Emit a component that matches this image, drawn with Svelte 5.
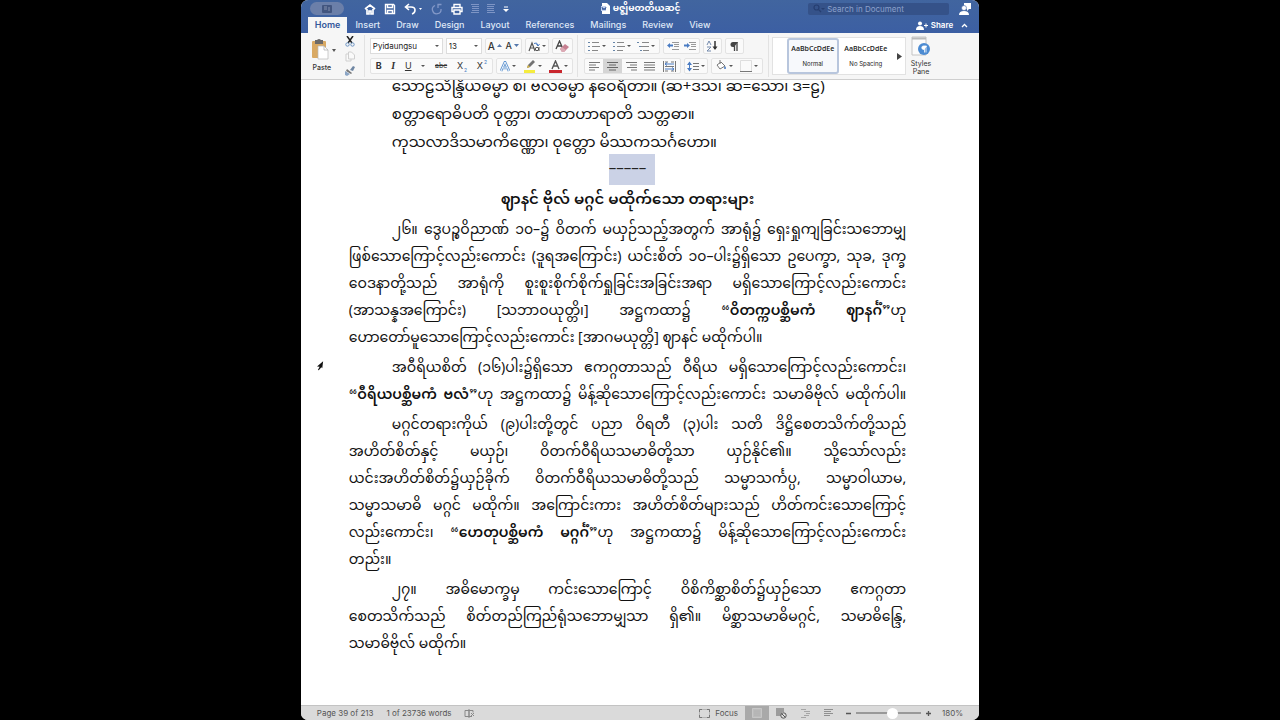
<script>
  let font = 'Pyidaungsu';
  let size = '13';
  let search = '';
  let zoom = 58;

  const tabs = ['Home', 'Insert', 'Draw', 'Design', 'Layout', 'References', 'Mailings', 'Review', 'View'];

  const verses = [
    'သောဠသိန္ဒြိယဓမ္မာ စ၊ ဗလဓမ္မာ နဝေရိတာ။ (ဆ+ဒသ၊ ဆ=သော၊ ဒ=ဠ)',
    'စတ္တာရောဓိပတိ ဝုတ္တာ၊ တထာဟာရာတိ သတ္တဓာ။',
    'ကုသလာဒိသမာကိဏ္ဏော၊ ဝုတ္တော မိဿကသင်္ဂဟော။'
  ];

  // text between asterisks is bold
  const paragraphs = [
    [
      '၂၆။ ဒွေပဉ္စဝိညာဏ် ၁၀–၌ ဝိတက် မယှဉ်သည့်အတွက် အာရုံ၌ ရှေးရှုကျခြင်းသဘောမျှ',
      'ဖြစ်သောကြောင့်လည်းကောင်း (ဒူရအကြောင်း) ယင်းစိတ် ၁၀–ပါး၌ရှိသော ဥပေက္ခာ, သုခ, ဒုက္ခ',
      'ဝေဒနာတို့သည် အာရုံကို စူးစူးစိုက်စိုက်ရှုခြင်းအခြင်းအရာ မရှိသောကြောင့်လည်းကောင်း',
      '(အာသန္နအကြောင်း) [သဘာဝယုတ္တိ၊] အဋ္ဌကထာ၌ “*ဝိတက္ကပစ္ဆိမကံ ဈာနင်္ဂံ*”ဟု',
      'ဟောတော်မူသောကြောင့်လည်းကောင်း [အာဂမယုတ္တိ] ဈာနင် မထိုက်ပါ။'
    ],
    [
      'အဝီရိယစိတ် (၁၆)ပါး၌ရှိသော ဧကဂ္ဂတာသည် ဝီရိယ မရှိသောကြောင့်လည်းကောင်း၊',
      '“*ဝီရိယပစ္ဆိမကံ ဗလံ*”ဟု အဋ္ဌကထာ၌ မိန့်ဆိုသောကြောင့်လည်းကောင်း သမာဓိဗိုလ် မထိုက်ပါ။'
    ],
    [
      'မဂ္ဂင်တရားကိုယ် (၉)ပါးတို့တွင် ပညာ ဝိရတီ (၃)ပါး သတိ ဒိဋ္ဌိစေတသိက်တို့သည်',
      'အဟိတ်စိတ်နှင့် မယှဉ်၊ ဝိတက်ဝီရိယသမာဓိတို့သာ ယှဉ်နိုင်၏။ သို့သော်လည်း',
      'ယင်းအဟိတ်စိတ်၌ယှဉ်ခိုက် ဝိတက်ဝီရိယသမာဓိတို့သည် သမ္မာသင်္ကပ္ပ, သမ္မာဝါယာမ,',
      'သမ္မာသမာဓိ မဂ္ဂင် မထိုက်။ အကြောင်းကား အဟိတ်စိတ်များသည် ဟိတ်ကင်းသောကြောင့်',
      'လည်းကောင်း၊ “*ဟေတုပစ္ဆိမကံ မဂ္ဂင်္ဂံ*”ဟု အဋ္ဌကထာ၌ မိန့်ဆိုသောကြောင့်လည်းကောင်း',
      'တည်း။'
    ],
    [
      '၂၇။ အဓိမောက္ခမှ ကင်းသောကြောင့် ဝိစိကိစ္ဆာစိတ်၌ယှဉ်သော ဧကဂ္ဂတာ',
      'စေတသိက်သည် စိတ်တည်ကြည်ရုံသဘောမျှသာ ရှိ၏။ မိစ္ဆာသမာဓိမဂ္ဂင်, သမာဓိန္ဒြေ,',
      'သမာဓိဗိုလ် မထိုက်။'
    ]
  ];

  // a closing line is only stretched when it nearly fills the column
  const isShort = (lines, i) => i === lines.length - 1 && lines[i].length < 75;
</script>

<div class="window">
  <header>
    <div class="titlebar">
      <div class="left">
        <button class="pill" aria-label="Window controls">
          <svg width="12" height="8" viewBox="0 0 12 8"><rect x="1" y="0" width="10" height="8" rx="1" fill="#42557f" /><path d="M3 2h3M3 4h3M8 2v4" stroke="#8592af" /></svg>
        </button>
        <div class="quick">
          <button aria-label="Home"><svg width="12" height="12" viewBox="0 0 12 12"><path d="M1 6l5-4 5 4M3 6v5h2V8h2v3h2V6" fill="none" stroke="#fff" stroke-width="1.7" /></svg></button>
          <button aria-label="Save"><svg width="12" height="12" viewBox="0 0 12 12"><path d="M1.500 1.500h8l1 1v8h-9zM3.500 1.500v3h5v-3M3.500 10.500v-3h5v3" fill="none" stroke="#fff" stroke-width="1.400" /></svg></button>
          <button aria-label="Undo"><svg width="19" height="12" viewBox="0 0 19 12"><path d="M5 1L1.500 4 5 7M2 4h5q4 0 4 3t-3 4" fill="none" stroke="#fff" stroke-width="1.600" /><path d="M15 5h3l-1.500 2z" fill="#fff" /></svg></button>
          <button aria-label="Redo"><svg width="12" height="12" viewBox="0 0 12 12"><path d="M4 2.500a4.300 4.300 0 1 0 6 3.500M7 5V1.500h3.500" fill="none" stroke="#8197c7" stroke-width="1.300" /></svg></button>
          <button aria-label="Print"><svg width="12" height="12" viewBox="0 0 12 12"><path d="M3 4V1.500h6V4M3 8.500H1V4.500h10v4H9M3 7h6v4H3z" fill="none" stroke="#fff" stroke-width="1.400" /></svg></button>
          <button aria-label="Outdent"><svg width="8" height="10" viewBox="0 0 8 10"><path d="M0 .5h8M1 2.500h7M1 4.500h7M1 6.500h7M0 8.500h8" stroke="#7e95c5" /></svg></button>
          <button aria-label="Indent"><svg width="8" height="10" viewBox="0 0 8 10"><path d="M0 .5h8M0 2.500h7M0 4.500h7M0 6.500h7M0 8.500h8" stroke="#7e95c5" /></svg></button>
          <button aria-label="Customize"><svg width="6" height="8" viewBox="0 0 6 8"><path d="M1 2h4" stroke="#fff" /><path d="M0 4h6L3 7z" fill="#fff" /></svg></button>
        </div>
      </div>
      <h1>
        <svg width="9" height="11" viewBox="0 0 9 11"><path d="M1 0h5l3 3v8H1z" fill="#fff" /><path d="M0 3h5v5H0z" fill="#c4d2ee" /><path d="M1 4l1 3 1-2 1 2 1-3" stroke="#3d5f9f" fill="none" /></svg>
        <span>မဇ္ဈိမတတိယဆင့်</span>
      </h1>
      <div class="right">
        <label class="search">
          <svg width="12" height="9" viewBox="0 0 12 9"><circle cx="3.500" cy="3.500" r="2.500" fill="none" stroke="#263e70" stroke-width="1.200" /><path d="M5.500 5.500L8 8" stroke="#263e70" stroke-width="1.200" /><path d="M8 4h4l-2 2z" fill="#263e70" /></svg>
          <input type="text" placeholder="Search in Document" aria-label="Search in Document" bind:value={search} />
        </label>
        <button class="presence" aria-label="Account"><svg width="12" height="12" viewBox="0 0 12 12"><path d="M5 0h7v6h-2l-2 2V6H5z" fill="#fff" /><circle cx="5" cy="5" r="2.500" fill="#fff" stroke="#3d5f9f" stroke-width=".6" /><path d="M0 12q0-4 5-4t5 4z" fill="#fff" /></svg></button>
      </div>
    </div>
    <nav>
      {#each tabs as tab, i}
        <button class="tab" class:active={i === 0}>{tab}</button>
      {/each}
      <button class="share"><svg width="12" height="9" viewBox="0 0 12 9"><circle cx="4" cy="2.500" r="2" fill="#fff" /><path d="M0 9q0-4 4-4t4 4z" fill="#fff" /><path d="M8 4.500h4M10 2.500v4" stroke="#fff" /></svg>Share</button>
      <button class="collapse" aria-label="Collapse ribbon"><svg width="7" height="5" viewBox="0 0 7 5"><path d="M1 4l2.500-2.500L6 4" fill="none" stroke="#fff" stroke-width="1.300" /></svg></button>
    </nav>
  </header>

  <section class="ribbon" aria-label="Ribbon">
    <button class="paste">
      <svg width="28" height="22" viewBox="0 0 28 22"><rect x="1" y="2" width="14" height="17" rx="1" fill="#d9a963" /><path d="M4 1h2q2-2 4 0h2v4H4z" fill="#6c6a69" /><path d="M7 7h6l4 4v9H7z" fill="#fff" stroke="#b8b8b8" stroke-width=".7" /><path d="M13 7v4h4" fill="none" stroke="#aaa" stroke-width=".7" /><path d="M21 10h4l-2 3z" fill="#555" /></svg>
      <span>Paste</span>
    </button>
    <div class="clip">
      <button aria-label="Cut"><svg width="10" height="11" viewBox="0 0 10 11"><path d="M2 0l5 7M8 0L3 7" stroke="#222" stroke-width="1.500" /><circle cx="2.500" cy="8.500" r="1.700" fill="none" stroke="#6c94c3" /><circle cx="7.500" cy="8.500" r="1.700" fill="none" stroke="#6c94c3" /></svg></button>
      <button aria-label="Copy"><svg width="10" height="11" viewBox="0 0 10 11"><path d="M3.500 1h3l3 3v4h-6zM3.500 3H1v7h5V8" fill="#fafafa" stroke="#cfcfcf" /></svg></button>
      <button aria-label="Format painter"><svg width="11" height="10" viewBox="0 0 11 10"><path d="M6 4l3-4 2 1-2 4z" fill="#6f86a3" /><path d="M3 3l5 4-1 1-5-3z" fill="#777" /><path d="M1 5l5 3-3 2-2-1z" fill="#8ca6c6" /></svg></button>
    </div>

    <div class="tools">
      <div class="row">
        <span class="combo family"><select aria-label="Font" bind:value={font}><option>Pyidaungsu</option></select></span>
        <span class="combo size"><select aria-label="Font size" bind:value={size}><option>13</option></select></span>
        <div class="group w37"><button aria-label="Grow font"><span class="big">A</span><svg width="5" height="4" viewBox="0 0 5 4"><path d="M0 3h5L2.500 0z" fill="#5578ac" /></svg></button><button aria-label="Shrink font"><span>A</span><svg width="5" height="4" viewBox="0 0 5 4"><path d="M0 0h5L2.500 3z" fill="#5578ac" /></svg></button></div>
        <div class="group w24"><button aria-label="Change case"><svg width="12" height="11" viewBox="0 0 12 11"><path d="M1 10L4 2l3 8M2 7h4" fill="none" stroke="#555" stroke-width="1.200" /><circle cx="9" cy="8" r="1.700" fill="none" stroke="#555" /><path d="M11 6v4" stroke="#555" /><path d="M6 2.500q3-2 4 2M8.500 3L10 5l1.500-2" fill="none" stroke="#4a7cc3" /></svg><i class="caret"></i></button></div>
        <div class="group w21"><button aria-label="Clear formatting"><svg width="15" height="13" viewBox="0 0 15 13"><path d="M1 9L4.500 1 8 9M2.500 6h4" fill="none" stroke="#444" stroke-width="1.300" /><path d="M5 9l5-5 4 3-5 5H7z" fill="#c78091" /><path d="M5 9l2-2 4 3-2 2H7z" fill="#dba9b4" /></svg></button></div>
      </div>
      <div class="row">
        <div class="group w123">
          <button><b>B</b></button><button><i class="serif">I</i></button><button><u>U</u></button><button aria-label="Underline style"><i class="caret"></i></button><button><s>abc</s></button><button aria-label="Subscript">X<sub>2</sub></button><button aria-label="Superscript">X<sup>2</sup></button>
        </div>
        <div class="group w77">
          <button aria-label="Text effects"><svg width="10" height="11" viewBox="0 0 10 11"><path d="M1 10L5 1l4 9M3 7h4" fill="none" stroke="#5f94d0" stroke-width="2.600" /><path d="M1 10L5 1l4 9M3 7h4" fill="none" stroke="#f4f8fc" /></svg><i class="caret"></i></button>
          <button aria-label="Highlight"><svg width="13" height="13" viewBox="0 0 13 13"><path d="M1 10h11v3H1z" fill="#f5ec3f" /><path d="M4 8l1-3 5-5 2 2-5 5z" fill="#737373" /><path d="M4 8l1-3 2 2z" fill="#dbb943" /></svg><i class="caret"></i></button>
          <button aria-label="Font color"><svg width="13" height="13" viewBox="0 0 13 13"><path d="M0 10h13v3H0z" fill="#c9262e" /><path d="M3 9l3.500-8L10 9M4.500 6h4" fill="none" stroke="#555" stroke-width="1.400" /></svg><i class="caret"></i></button>
        </div>
      </div>
    </div>

    <div class="tools para">
      <div class="row">
        <div class="group w76">
          {#each ['Bullets', 'Numbering', 'Multilevel list'] as name, i}
            <button aria-label={name}><svg width="12" height="10" viewBox="0 0 12 10"><path d="M{i === 2 ? 5 : 4} 1.500h7M4 5.500h8M{i === 2 ? 6 : 4} 9.500h6" stroke="#888" /><path d="M0 1.500h2M{i === 2 ? 2 : 0} 5.500h2M{i === 2 ? 3 : 0} 9.500h2" stroke="#6685a8" /></svg><i class="caret"></i></button>
          {/each}
        </div>
        <div class="group w37">
          <button aria-label="Decrease indent"><svg width="12" height="10" viewBox="0 0 12 10"><path d="M5 1.500h7M7 3.500h5M7 5.500h5M5 8.500h7" stroke="#999" /><path d="M0 4.500L3 2v1.500h3v2H3V7z" fill="#4a7cc3" /></svg></button>
          <button aria-label="Increase indent"><svg width="12" height="10" viewBox="0 0 12 10"><path d="M5 1.500h7M7 3.500h5M7 5.500h5M5 8.500h7" stroke="#999" /><path d="M6 4.500L3 2v1.500H0v2h3V7z" fill="#4a7cc3" /></svg></button>
        </div>
        <div class="group w19"><button aria-label="Sort"><svg width="12" height="12" viewBox="0 0 12 12"><path d="M1 5l2-4 2 4M1 7h4L1 11h4" fill="none" stroke="#7389ac" /><path d="M9 1v8" stroke="#333" stroke-width="1.500" /><path d="M6.500 6.500h5L9 10z" fill="#333" /></svg></button></div>
        <div class="group w19"><button aria-label="Show marks"><svg width="10" height="11" viewBox="0 0 10 11"><path d="M9 1H4a2.500 2.500 0 0 0 0 5h1z" fill="#444" /><path d="M5.500 1v9M8 1v9" stroke="#444" stroke-width="1.300" /></svg></button></div>
      </div>
      <div class="row">
        <div class="group w97">
          <button aria-label="Align left"><svg width="11" height="9" viewBox="0 0 11 9"><path d="M0 .5h11M0 3h7M0 5.500h10M0 8h6" stroke="#777" /></svg></button>
          <button class="on" aria-label="Center"><svg width="11" height="9" viewBox="0 0 11 9"><path d="M0 .5h11M2 3h7M0 5.500h11M2 8h7" stroke="#666" /></svg></button>
          <button aria-label="Align right"><svg width="11" height="9" viewBox="0 0 11 9"><path d="M0 .5h11M4 3h7M1 5.500h10M5 8h6" stroke="#777" /></svg></button>
          <button aria-label="Justify"><svg width="11" height="9" viewBox="0 0 11 9"><path d="M0 .5h11M0 3h11M0 5.500h11M0 8h11" stroke="#777" /></svg></button>
          <button aria-label="Distribute"><svg width="13" height="11" viewBox="0 0 13 11"><path d="M.5 0v11M12.500 0v11M2 1h3M8 1h3M2 5.500h9M2 10h3M8 10h3" stroke="#777" /><path d="M2 3h9M2 8h9M4 1.500L2 3l2 1.500M9 6.500L11 8 9 9.500" fill="none" stroke="#4a7cc3" /></svg></button>
        </div>
        <div class="group w24"><button aria-label="Line spacing"><svg width="12" height="11" viewBox="0 0 12 11"><path d="M6 2.500h6M6 5.500h6M6 8.500h6" stroke="#777" /><path d="M2.500 1v9" stroke="#4a7cc3" /><path d="M0 4l2.500-3.500L5 4zM0 7l2.500 3.500L5 7z" fill="#4a7cc3" /></svg><i class="caret"></i></button></div>
        <div class="group w52">
          <button aria-label="Shading"><svg width="12" height="12" viewBox="0 0 12 12"><path d="M2 5l4-3 4 4-5 3z" fill="#fff" stroke="#777" /><path d="M5 0v4" stroke="#777" /><path d="M10 6q2 3 0 3t0-3" fill="#4a7cc3" /></svg><i class="caret"></i></button>
          <button aria-label="Borders"><svg width="12" height="12" viewBox="0 0 12 12"><path d="M.5.5h11v11M.5.5v11" fill="none" stroke="#dedede" /><path d="M0 11.500h12" stroke="#777" /></svg><i class="caret"></i></button>
        </div>
      </div>
    </div>

    <div class="gallery">
      <button class="style chosen"><b>AaBbCcDdEe</b><span>Normal</span></button>
      <button class="style"><b>AaBbCcDdEe</b><span>No Spacing</span></button>
      <button class="more" aria-label="More styles"><svg width="5" height="7" viewBox="0 0 5 7"><path d="M0 0v7l5-3.500z" fill="#444" /></svg></button>
    </div>
    <button class="pane">
      <svg width="20" height="21" viewBox="0 0 20 21"><path d="M1 1h14v18H1z" fill="#fbfbfb" stroke="#c4c4c4" /><path d="M1 2.500h14" stroke="#bbb" stroke-width="2" /><circle cx="13" cy="13" r="6" fill="#4c8bd2" /><path d="M15.500 10h-3a1.700 1.700 0 0 0 0 3.400h.5zM13.500 10v6.500M15 10v6.500" fill="#fff" stroke="#fff" stroke-width=".8" /></svg>
      <span>Styles<br />Pane</span>
    </button>
  </section>

  <main>
    <div class="verses">
      {#each verses as verse}
        <p>{verse}</p>
      {/each}
    </div>
    <p class="rule"><mark>–––––</mark></p>
    <h2>ဈာနင် ဗိုလ် မဂ္ဂင် မထိုက်သော တရားများ</h2>
    {#each paragraphs as lines}
      <p class="body">
        {#each lines as line, n}
          <span class="line" class:short={isShort(lines, n)}>{#each line.split('*') as part, i}{#if i % 2}<b>{part}</b>{:else}{part}{/if}{/each}</span>
        {/each}
      </p>
    {/each}
    <svg class="pointer" width="7" height="11" viewBox="0 0 8 12"><path d="M7 1L0 7l3 .5L1 11l1 .5L5 8l1 1z" fill="#111" /></svg>
  </main>

  <footer>
    <span class="pages">Page 39 of 213</span>
    <span>1 of 23736 words</span>
    <button class="proof" aria-label="Proofing"><svg width="11" height="9" viewBox="0 0 11 9"><path d="M5 1.500H1v6h4zM5 1.500h4v2M5 7.500h3M7 4l3 3M10 4L7 7M5 0v9" fill="none" stroke="#888" /></svg></button>
    <button class="focus"><svg width="11" height="9" viewBox="0 0 11 9"><path d="M.5.5h10v8H.500z" fill="none" stroke="#b5b5b5" /><path d="M.5 3V.5H3M8 .5h2.500V3M10.500 6v2.500H8M3 8.500H.5V6" fill="none" stroke="#777" /></svg>Focus</button>
    <div class="views">
      <button class="on" aria-label="Print layout"><svg width="10" height="10" viewBox="0 0 10 10"><path d="M.5.5h9v9h-9z" fill="#bbb" stroke="#c6c6c6" /><path d="M2 3h6M2 5h6M2 7h6" stroke="#b0b0b0" /></svg></button>
      <button aria-label="Web layout"><svg width="12" height="11" viewBox="0 0 12 11"><path d="M1 1h8M1 3h8M1 5h6M1 7h5" stroke="#888" stroke-width="1.300" /><circle cx="8.500" cy="7.500" r="2.700" fill="#ddd" stroke="#555" /><path d="M7 6l3 3" stroke="#555" /></svg></button>
      <button aria-label="Outline"><svg width="11" height="10" viewBox="0 0 11 10"><path d="M1 1.500h5M4 3.500h6M6 5.500h4M4 7.500h5M1 9.500h5" stroke="#a5a5a5" /></svg></button>
      <button aria-label="Draft"><svg width="10" height="10" viewBox="0 0 10 10"><path d="M0 1.500h9M0 3.500h7M0 5.500h9M0 7.500h6" stroke="#8f8f8f" /></svg></button>
    </div>
    <button class="step" aria-label="Zoom out"><svg width="7" height="7" viewBox="0 0 7 7"><path d="M1 3.500h5" stroke="#555" stroke-width="1.300" /></svg></button>
    <input type="range" aria-label="Zoom" min="0" max="100" bind:value={zoom} />
    <button class="step" aria-label="Zoom in"><svg width="7" height="7" viewBox="0 0 7 7"><path d="M1 3.500h5M3.500 1v5" stroke="#555" stroke-width="1.300" /></svg></button>
    <span class="percent">180%</span>
  </footer>
</div>

<style>
  :global(body) {
    margin: 0;
    background: #000;
  }

  .window {
    display: flex;
    flex-direction: column;
    width: 53vw;
    min-height: 100vh;
    margin: 0 auto;
    overflow: hidden;
    border-radius: 7px;
    background: #fff;
    color: #333;
    font: 8px/10px Inter, "Liberation Sans", sans-serif;
  }

  button {
    display: flex;
    align-items: center;
    justify-content: center;
    padding: 0;
    border: 0;
    background: none;
    color: inherit;
    font: inherit;
  }

  svg {
    display: block;
    flex: none;
  }

  header {
    background: linear-gradient(#41659f, #3c5fa3);
    color: #fff;
  }

  .titlebar {
    display: grid;
    grid-template-columns: 1fr auto 1fr;
    align-items: center;
    height: 17px;
    padding: 0 8px 0 9px;
  }

  .left,
  .right {
    display: flex;
    align-items: center;
  }

  .right {
    justify-content: flex-end;
  }

  .pill {
    width: 34px;
    height: 13px;
    border-radius: 7px;
    background: #6b7fa9;
  }

  .quick {
    display: flex;
    align-items: center;
    gap: 8px;
    margin-left: 20px;
  }

  h1 {
    display: flex;
    align-items: center;
    gap: 3px;
    margin: 0;
    font: bold 9px/15px Pyidaungsu, "Noto Sans Myanmar", Padauk, "Noto Sans", sans-serif;
  }

  h1 span {
    padding-top: 2px;
  }

  .search {
    display: flex;
    align-items: center;
    gap: 2px;
    width: 141px;
    height: 12px;
    margin-right: 10px;
    padding-left: 5px;
    border-radius: 2px;
    background: #355289;
    box-sizing: border-box;
  }

  .search input {
    min-width: 0;
    padding: 0;
    border: 0;
    background: none;
    color: #fff;
    font: 8px/12px Inter, sans-serif;
  }

  .search input::placeholder {
    color: #8ca1cb;
  }

  nav {
    display: flex;
    align-items: stretch;
    height: 16px;
    padding: 0 11px 0 7px;
    font-size: 9px;
  }

  .tab {
    padding: 0 8px;
    color: #dfe7f6;
    font-weight: 500;
  }

  .tab.active {
    padding: 0 7px;
    background: #f6f6f6;
    color: #35599c;
    font-weight: 600;
  }

  .share {
    gap: 3px;
    margin-left: auto;
    font-size: 8px;
    font-weight: 600;
  }

  .collapse {
    margin-left: 8px;
  }

  .ribbon {
    display: flex;
    align-items: center;
    height: 46px;
    border-bottom: 1px solid #cfcfcf;
    background: #f6f6f6;
  }

  .paste {
    flex-direction: column;
    gap: 2px;
    width: 42px;
    font-size: 7px;
    font-weight: 500;
  }

  .paste svg {
    margin-left: 6px;
  }

  .clip {
    display: flex;
    flex-direction: column;
    gap: 4px;
    width: 14px;
  }

  .tools {
    display: flex;
    flex-direction: column;
    gap: 4px;
    margin-left: 7px;
    padding: 3px 4px 3px 5px;
    border-left: 1px solid #e2e2e2;
  }

  .tools.para {
    margin-left: 0;
    padding-left: 6px;
    padding-right: 5px;
    border-right: 1px solid #e2e2e2;
  }

  .row {
    display: flex;
    gap: 3px;
  }

  .group {
    display: flex;
    height: 16px;
    border: 1px solid #e3e3e3;
    border-radius: 2px;
    background: #fafafa;
    box-sizing: border-box;
    font-size: 9px;
  }

  .group button {
    flex: auto;
    gap: 2px;
  }

  .w19 { width: 19px; }
  .w21 { width: 21px; }
  .w24 { width: 24px; }
  .w37 { width: 37px; }
  .w52 { width: 52px; }
  .w76 { width: 76px; }
  .w77 { width: 77px; }
  .w97 { width: 97px; }
  .w123 { width: 123px; }

  .w37 span {
    font-weight: 500;
  }

  .big {
    font-size: 10px;
  }

  .serif {
    font-family: "Liberation Serif", serif;
    font-size: 10px;
    font-weight: bold;
  }

  s {
    font-size: 7px;
  }

  sub,
  sup {
    color: #4a7cc3;
    font-size: 5px;
    line-height: 6px;
  }

  sub {
    align-self: flex-end;
  }

  sup {
    align-self: flex-start;
  }

  .w123 button {
    gap: 1px;
  }

  .caret {
    width: 0;
    border: 2px solid transparent;
    border-top-color: #555;
    border-bottom: 0;
  }

  .combo {
    display: flex;
    align-items: center;
    height: 16px;
    padding-right: 3px;
    border: 1px solid #dcdcdc;
    background: #fff;
    box-sizing: border-box;
  }

  .combo::after {
    border: 2px solid transparent;
    border-top-color: #555;
    border-bottom: 0;
    content: "";
  }

  .combo select {
    flex: 1;
    min-width: 0;
    padding: 0 0 0 2px;
    border: 0;
    background: none;
    appearance: none;
    color: #222;
    font: 8px/14px Inter, sans-serif;
  }

  .family { width: 73px; }
  .size { width: 36px; }

  .on {
    background: #d5d5d5;
  }

  .gallery {
    display: flex;
    align-items: center;
    gap: 1px;
    width: 134px;
    height: 38px;
    margin-left: 3px;
    padding-left: 14px;
    border: 1px solid #e2e2e2;
    background: #fff;
    box-sizing: border-box;
  }

  .style {
    flex-direction: column;
    gap: 5px;
    width: 52px;
    height: 36px;
    box-sizing: border-box;
    color: #222;
    font-size: 6px;
  }

  .style b {
    font: 600 7px/10px "Open Sans", sans-serif;
  }

  .style.chosen {
    border: 2px solid #b8c6dd;
    border-radius: 3px;
    background: #f7f9fc;
  }

  .more {
    margin-left: auto;
    margin-right: 3px;
  }

  .pane {
    flex-direction: column;
    gap: 3px;
    margin-left: 5px;
    font-size: 7px;
    line-height: 8px;
  }

  main {
    position: relative;
    flex: 1;
    padding: 0 73px 0 48px;
    overflow: hidden;
    color: #111;
    font: 14px/27px Pyidaungsu, "Noto Sans Myanmar", Padauk, "Noto Sans", sans-serif;
  }

  main p,
  h2 {
    margin: 0;
    white-space: nowrap;
  }

  main .verses {
    margin: -6px 0 -4px;
    padding-left: 43px;
    font-size: 15px;
    line-height: 28px;
  }

  .rule {
    font-size: 15px;
    line-height: 31px;
    text-align: center;
  }

  mark {
    display: inline-block;
    margin-right: -9px;
    padding-right: 9px;
    background: #cbd2e6;
    color: #222;
  }

  h2 {
    font-size: 15px;
    font-weight: 600;
    line-height: 32px;
    text-align: center;
  }

  main .body {
    margin-bottom: 3px;
  }

  .body b {
    font-weight: 600;
  }

  .line {
    display: block;
    text-align: justify;
    text-align-last: justify;
  }

  .line:first-child {
    padding-left: 43px;
  }

  .line.short {
    text-align-last: left;
  }

  .pointer {
    position: absolute;
    top: 280px;
    left: 16px;
  }

  footer {
    display: flex;
    align-items: center;
    height: 14px;
    padding: 0 16px;
    border-top: 1px solid #c3c3c3;
    background: #dadada;
    color: #555;
  }

  .pages {
    margin-right: 13px;
  }

  .proof {
    margin-left: 12px;
  }

  .focus {
    gap: 5px;
    margin-left: auto;
  }

  .views {
    display: flex;
    align-self: stretch;
    margin-left: 7px;
  }

  .views button {
    width: 24px;
  }

  .views .on {
    background: #a9a9a9;
  }

  .step {
    margin: 0 4px;
  }

  input[type="range"] {
    width: 65px;
    height: 12px;
    margin: 0;
    appearance: none;
    background: linear-gradient(#999, #999) center / 100% 2px no-repeat;
  }

  input[type="range"]::-webkit-slider-thumb {
    width: 11px;
    height: 11px;
    border-radius: 50%;
    appearance: none;
    background: #fff;
  }

  .percent {
    margin-left: 6px;
  }
</style>
